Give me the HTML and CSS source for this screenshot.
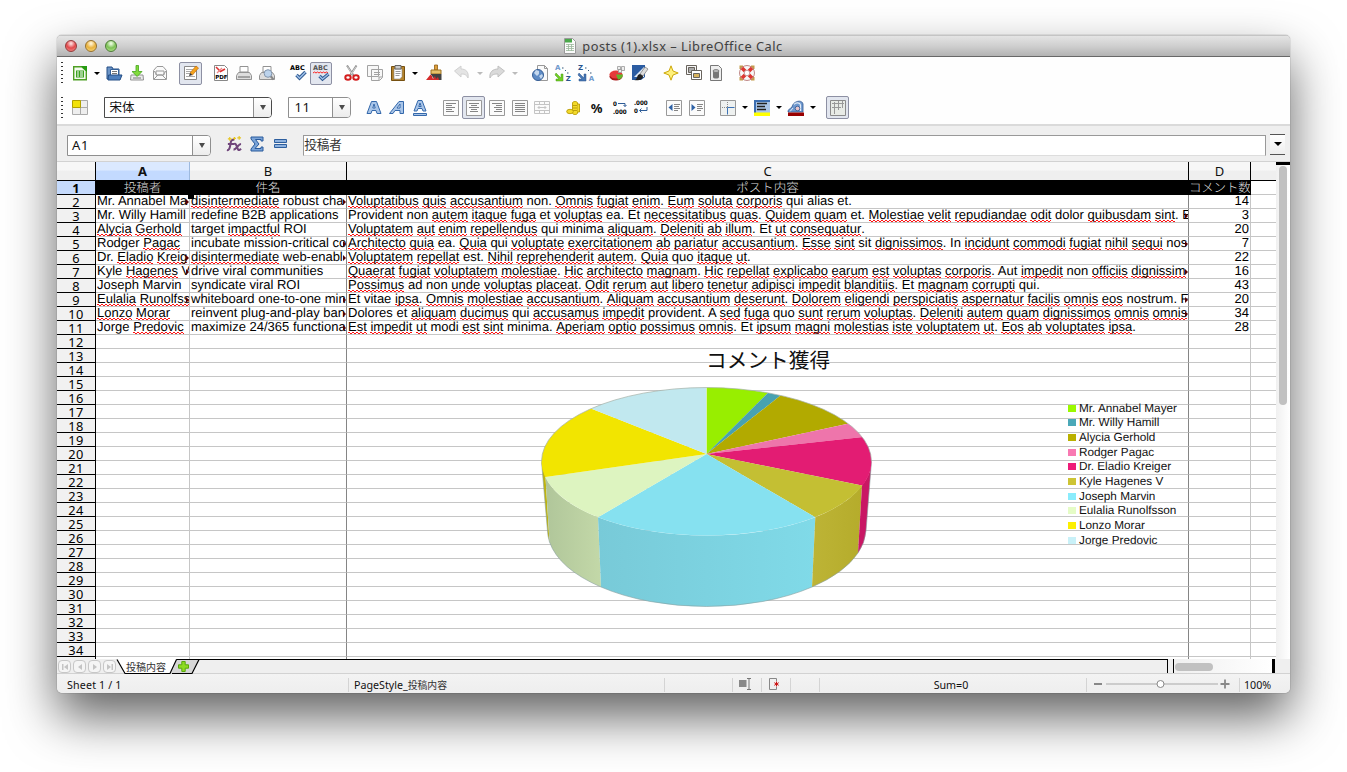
FILE: index.html
```html
<!DOCTYPE html>
<html lang="ja">
<head>
<meta charset="utf-8">
<title>posts (1).xlsx – LibreOffice Calc</title>
<link rel="stylesheet" href="styles.css">
</head>
<body>
<div class="window">
  <header class="titlebar">
    <div class="lights"><span class="light red"></span><span class="light amber"></span><span class="light green"></span></div>
    <div class="title">
      <svg class="doc" viewBox="0 0 12 16"><path d="M.5.5h8l3 3v12H.5z" fill="#fafafa" stroke="#999"/><path d="M1 1h7v3.5H1z" fill="#4aa84a"/><path d="M2 6.500h8M2 8.500h8M2 10.500h8M2 12.500h8M4.500 6v7M7.500 6v7" stroke="#9ab89a" stroke-width=".8"/></svg>
      <span>posts (1).xlsx – LibreOffice Calc</span>
    </div>
  </header>

  <div class="toolbar first">
    <span class="grip"></span>
    <span class="cell"><svg viewBox="0 0 16 16"><path d="M1.700 1.700h8l4.600 4V14.800H1.700z" fill="#f4fbef" stroke="#4f9f24" stroke-width="1.400"/><path d="M9 1h6v6L13 5 11 3z" fill="#259b12"/><path d="M4 5.500h8v7H4z" fill="#3da220"/><path d="M5 6.500h2v1H5zm3 0h3v1H8zM5 8.500h2v1H5zm3 0h3v1H8zm-3 2h2v1H5zm3 0h3v1H8z" fill="#fff"/></svg></span>
    <span class="arrow"></span>
    <span class="cell"><svg viewBox="0 0 16 16"><path d="M1 2h5l1 2h6v10H1z" fill="#6c94c6" stroke="#244f86"/><path d="M4.500 4.500h8V12h-8z" fill="#fff" stroke="#32609a"/><path d="M6 6.500h5M6 8.500h5" stroke="#777"/><path d="M2.500 10H16l-2 5H2z" fill="#4d7fbd" stroke="#244f86"/></svg></span>
    <span class="cell"><svg viewBox="0 0 16 16"><path d="M2 10h12l.5 5h-13z" fill="#ececec" stroke="#929292"/><path d="M4 13h8" stroke="#777"/><path d="M7 .500h2.500v6H13L8.200 11.500 3 6.500h4z" fill="#82db3c" stroke="#45a51c" stroke-width=".8"/></svg></span>
    <span class="cell"><svg viewBox="0 0 16 16" fill="#fafafa" stroke="#999"><path d="M1.500 5.500 5 1.500h6l3.500 4v9h-13z"/><path d="M4 6h8v4H4zM2 14l4-4h4l4 4M2 6l3 4m9-4-3 4"/></svg></span>
    <span class="gap"></span>
    <span class="cell on"><svg viewBox="0 0 16 16"><path d="M1.500 1.500h12v13h-12z" fill="#fff" stroke="#888"/><path d="M3 4.500h7M3 6.500h5M3 8.500h4M3 11.500h9" stroke="#aaa"/><path d="m7 8 6-7 2.500 2-6 7z" fill="#f3a31c" stroke="#c46a0c" stroke-width=".7"/><path d="m7 8 2.500 2L6 11z" fill="#333"/></svg></span>
    <span class="gap"></span>
    <span class="cell"><svg viewBox="0 0 16 16"><path d="M1.500.500h10l3 3v12h-13z" fill="#fff" stroke="#888"/><path d="M3 2l4.500 4.500L12 4" fill="none" stroke="#d33" stroke-width="1.600"/><path d="M4 8l5-5" stroke="#e88" stroke-width="1.200"/><text x="2.200" y="13.800" class="pdf">PDF</text></svg></span>
    <span class="cell"><svg viewBox="0 0 16 16" stroke="#939393"><path d="M4 1.500h8V7H4z" fill="#fff"/><path d="M2.500 7.500h11l2 3v4H.5v-4z" fill="#ddd"/><path d="M2 12h12" stroke="#666"/></svg></span>
    <span class="cell"><svg viewBox="0 0 16 16" stroke="#939393"><path d="M4 1.500h8V7H4z" fill="#fff"/><path d="M2.500 7.500h11l2 3v4H.5v-4z" fill="#ddd"/><path d="m11.500 11 3 3.500" stroke="#888" stroke-width="2"/><circle cx="9" cy="8.500" r="3.800" fill="#bcd3ec" stroke="#8295ad"/></svg></span>
    <span class="gap"></span>
    <span class="cell"><svg viewBox="0 0 16 16"><text x="0" y="5" class="abc">ABC</text><path d="m6.500 10 3 3 6-6" fill="none" stroke="#28538c" stroke-width="3.400"/><path d="m6.500 10 3 3 6-6" fill="none" stroke="#9bbce5" stroke-width="1.600"/></svg></span>
    <span class="cell on"><svg viewBox="0 0 16 16"><text x="0" y="5" class="abc dim">ABC</text><path d="m0 8 1.500-1L3 8l1.500-1L6 8l1.500-1L9 8l1.500-1L12 8l1.500-1L15 8" fill="none" stroke="#f22"/><path d="m6.500 11 3 3 6-5" fill="none" stroke="#28538c" stroke-width="3.200"/><path d="m6.500 11 3 3 6-5" fill="none" stroke="#9bbce5" stroke-width="1.500"/></svg></span>
    <span class="gap"></span>
    <span class="cell"><svg viewBox="0 0 16 16"><path d="m3 .5 6.500 10M12.500.5 6 10.500" stroke="#8d8d8d" stroke-width="2"/><path d="m3.500 1.500 5 8M12 1.500l-5 8" stroke="#eee" stroke-width=".7"/><g fill="none" stroke="#d31d1d" stroke-width="2"><ellipse cx="4" cy="12.500" rx="2.700" ry="2.200"/><ellipse cx="12" cy="12.500" rx="2.700" ry="2.200"/></g></svg></span>
    <span class="cell"><svg viewBox="0 0 16 16" fill="#f8f8f8" stroke="#a2a2a2"><path d="M.5.500h11v11H.5zM4.500 4.500h11v8l-3 3h-8z"/><path d="M7 7.500h6M7 9.500h6M7 11.500h4M15 12h-3v3"/></svg></span>
    <span class="cell"><svg viewBox="0 0 16 16"><path d="M1.500 1.500h13v14h-13z" fill="#b5842c" stroke="#765010"/><path d="M4 4h8v7.500L10 14H4z" fill="#fff" stroke="#888" stroke-width=".6"/><path d="M5 .5h6V4H5z" fill="#ccc" stroke="#666"/><path d="M5.500 6.500h5M5.500 8.500h5M5.500 10.500h4" stroke="#999"/></svg></span>
    <span class="arrow"></span>
    <span class="gap tiny"></span>
    <span class="cell"><svg viewBox="0 0 16 16"><path d="M8.500 0h3v5h-3z" fill="#dda03c" stroke="#8f5d13" stroke-width=".8"/><path d="M5 5h10v4H5z" fill="#e8c26a" stroke="#9c7022"/><path d="M4.500 9h11v6H9z" fill="#424242"/><path d="M4.500 9.500 0 15h13l-1-3-2 2-1-3-2 3-1-3z" fill="#d52b2b"/></svg></span>
    <span class="gap small"></span>
    <span class="cell"><svg viewBox="0 0 16 16"><path d="M.5 6 7 1v3c5 0 8 3 7 9-2-4-4-4-7-4v3z" fill="#e4e4e4" stroke="#d0d0d0"/></svg></span>
    <span class="arrow off"></span>
    <span class="cell"><svg viewBox="0 0 16 16"><path d="M15.500 6 9 1v3c-5 0-9 3-8 9 2-4 5-4 8-4v3z" fill="#dadada" stroke="#c0c0c0"/></svg></span>
    <span class="arrow off"></span>
    <span class="gap"></span>
    <span class="cell"><svg viewBox="0 0 16 16"><path d="M5.500.500h7l3 3v12h-10z" fill="#fafafa" stroke="#999"/><path d="M12.500.500v3h3" fill="none" stroke="#999"/><circle cx="6" cy="10" r="5.500" fill="#5e8bc5" stroke="#375f96"/><path d="m2 8 2-3 3 1v3l-2 2zm5 3 3-2 1 2-2 3z" fill="#c5d8ee"/></svg></span>
    <span class="cell"><svg viewBox="0 0 16 16"><text x="0" y="4.800" class="az">A</text><text x="10.800" y="16" class="az dark">Z</text><path d="M7 3h1.500M10 5.500h1M12 8h1.500" stroke="#357"/><path d="m1 8 5 5V9h2v7H1v-2h3L0 10z" fill="#71cf23" stroke="#49981b" stroke-width=".5"/></svg></span>
    <span class="cell"><svg viewBox="0 0 16 16"><text x="0" y="4.800" class="az dark">Z</text><text x="10.800" y="16" class="az">A</text><path d="M7 3h1.500M10 5.500h1M12 8h1.500" stroke="#357"/><path d="m1 8 5 5V9h2v7H1v-2h3L0 10z" fill="#4777b4" stroke="#2b538b" stroke-width=".5"/></svg></span>
    <span class="gap"></span>
    <span class="cell"><svg viewBox="0 0 16 16"><ellipse cx="7" cy="11.500" rx="6.500" ry="4" fill="#a91717"/><ellipse cx="7" cy="9.500" rx="6.500" ry="4" fill="#e63a3a"/><path d="M7 9.500h7c0 3-3 5-5 5z" fill="#62b62c"/><path d="M8.500 1.500h3v3h-3zm4 0h3v4h-3zm-3 3h3v3h-3z" fill="#eee" stroke="#999" stroke-width=".8"/></svg></span>
    <span class="cell"><svg viewBox="0 0 16 16"><path d="M0 0h13v12L9 15H0z" fill="#2b5ca2"/><path d="M2 12 12 2v10z" fill="#dfe9f5"/><path d="m8 9 5-7 3 2-5 7z" fill="#ddd" stroke="#777" stroke-width=".7"/><path d="M2 15c4 0 2-5 6-6l3 2c0 4-5 5-9 4z" fill="#222"/></svg></span>
    <span class="gap"></span>
    <span class="cell"><svg viewBox="0 0 16 16"><path d="m8 .8 2 5.200 5.200 2-5.200 2-2 5.200L6 10 .8 8 6 6z" fill="#fff17c" stroke="#cda80b"/></svg></span>
    <span class="cell"><svg viewBox="0 0 16 16" stroke="#68635c"><path d="M.5.500h10v9H.5z" fill="#f5f5f5"/><path d="M2.500 2.500h6v5h-6z" fill="#aaa"/><path d="M5.500 5.500h10v9h-10z" fill="#fff"/><path d="M7.500 8.500h6v4h-6z" fill="#d7b35e"/></svg></span>
    <span class="cell"><svg viewBox="0 0 16 16"><path d="M2.500.500h8l3 3v12h-11z" fill="#eee" stroke="#777"/><path d="M5 6v6c0 2 6 2 6 0V6z" fill="#777"/><ellipse cx="8" cy="6" rx="3" ry="1.500" fill="#bbb" stroke="#666" stroke-width=".7"/></svg></span>
    <span class="gap"></span>
    <span class="cell"><svg viewBox="0 0 16 16"><path d="M.500.500H4V4H.500zM12 .500h3.500V4H12zM.500 12H4v3.500H.500zM12 12h3.500v3.500H12z" fill="#c39a4a"/><circle cx="8" cy="8" r="7.500" fill="#f8f8f8" stroke="#b06a6a" stroke-width=".8"/><path d="M3 3l3 3M13 3l-3 3M3 13l3-3M13 13l-3-3" stroke="#dd3832" stroke-width="3.600"/><circle cx="8" cy="8" r="2.800" fill="#fff" stroke="#b77" stroke-width=".8"/></svg></span>
  </div>

  <div class="toolbar second">
    <span class="grip"></span>
    <span class="cell"><svg viewBox="0 0 16 16" stroke="#aaa" fill="#eee"><path d="M8.500.500h7v7h-7zM.5 7.500h8v7h-8zm8 0h7v7h-7z"/><path d="M.5.500h8v7h-8z" fill="#f2e20b" stroke="#b1a100"/></svg></span>
    <span class="combo font"><span class="value cjk">宋体</span><span class="drop"></span></span>
    <span class="combo size"><span class="value">11</span><span class="drop"></span></span>
    <span class="gap wide"></span>
    <span class="cell"><svg viewBox="0 0 16 16" class="letter"><path d="M5.500 1.500h5l4.500 12h-4l-1-3H6l-1 3H1zM8 4 6.800 8h2.400z"/></svg></span>
    <span class="cell"><svg viewBox="0 0 16 16" class="letter"><path d="M10 1.500h4.500v12H11v-3H6l-2 3H.5zM11 4 8 8h3z"/></svg></span>
    <span class="cell"><svg viewBox="0 0 16 16" class="letter"><path d="M6 .500h4l4 10.500h-3l-1-2.500H6L5 11H2zM8 3 6.800 6.500h2.400zM1.500 13.500h13v2h-13z"/></svg></span>
    <span class="gap"></span>
    <span class="cell"><svg viewBox="0 0 16 16" class="para"><path d="M.5.500h15v15H.5z"/><path class="ln" d="M3 3.500h10M3 5.500h6M3 7.500h9M3 9.500h6M3 11.500h8"/></svg></span>
    <span class="cell on"><svg viewBox="0 0 16 16" class="para"><path d="M.5.500h15v15H.5z"/><path class="ln" d="M3 3.500h10M5 5.500h6M3 7.500h10M5 9.500h6M4 11.500h8"/></svg></span>
    <span class="cell"><svg viewBox="0 0 16 16" class="para"><path d="M.5.500h15v15H.5z"/><path class="ln" d="M3 3.500h10M7 5.500h6M5 7.500h8M7 9.500h6M5 11.500h8"/></svg></span>
    <span class="cell"><svg viewBox="0 0 16 16" class="para"><path d="M.5.500h15v15H.5z"/><path class="ln" d="M3 3.500h10M3 5.500h10M3 7.500h10M3 9.500h10M3 11.500h10"/></svg></span>
    <span class="cell"><svg viewBox="0 0 16 16" class="para faint"><path d="M.5 1.500h15v12H.5zM.5 4.500h15M.5 10.500h15M5.500 1v3M10.500 1v3M5.500 11v3M10.500 11v3M4 7.500h8M5.500 6 4 7.500 5.500 9M10.500 6 12 7.500 10.500 9"/></svg></span>
    <span class="gap"></span>
    <span class="cell"><svg viewBox="0 0 16 16" fill="#f3da2a" stroke="#b89b08" stroke-width=".9"><path d="M6.500 3c0-2 5-2 5 0v10c0 2-5 2-5 0z"/><ellipse cx="4" cy="11.500" rx="3.300" ry="2.200"/><path d="M11.500 4h2v8h-2M7 5.500h4M7 8h4M7 10.500h4"/></svg></span>
    <span class="cell"><span class="percent">%</span></span>
    <span class="cell"><svg viewBox="0 0 16 16"><text x="1" y="6" class="num">0</text><text x="1" y="14" class="num">.000</text><path d="M6 3.500h7v3M11.500 5 13 6.500 14.500 5" fill="none" stroke="#2e5c97"/></svg></span>
    <span class="cell"><svg viewBox="0 0 16 16"><text x="0" y="5" class="num">.000</text><text x="0" y="13" class="num">0</text><path d="M13 7v3.500H6M7.500 8.500l-2 2 2 2" fill="none" stroke="#2e5c97"/></svg></span>
    <span class="gap"></span>
    <span class="cell"><svg viewBox="0 0 16 16" class="para"><path d="M.5.500h15v15H.5z"/><path class="ln" d="M8 4.500h6M8 6.500h5M8 8.500h6M8 10.500h4"/><path d="M6.500 4v7L2.500 7.500z" class="tri"/></svg></span>
    <span class="cell"><svg viewBox="0 0 16 16" class="para"><path d="M.5.500h15v15H.5z"/><path class="ln" d="M8 4.500h6M8 6.500h5M8 8.500h6M8 10.500h4"/><path d="M2.500 4v7l4-3.500z" class="tri"/></svg></span>
    <span class="gap"></span>
    <span class="cell"><svg viewBox="0 0 16 16"><path d="M.5.500h15v15H.5z" fill="#eef1f0" stroke="#999"/><path d="M7.500 2v12M2 7.500h12" stroke="#8a8a8a" stroke-dasharray="1 1"/><path d="M14.500 7.500h-7v7" fill="none" stroke="#3e73b5"/></svg></span>
    <span class="arrow"></span>
    <span class="cell"><svg viewBox="0 0 16 16"><path d="M0 0h16v13H0z" fill="#3b6db0"/><path d="M2 2h14v11H2z" fill="#a9c5e8"/><path d="M3 3.500h10M3 6.500h8M3 9.500h9" stroke="#222" stroke-width="1.300"/><path d="M0 12.500h16V16H0z" fill="#ff0"/></svg></span>
    <span class="arrow"></span>
    <span class="cell"><svg viewBox="0 0 16 16"><path d="M0 12c0-3 2-3 4-5C5 1 14-1 15 4v8z" fill="#6f99cf" stroke="#2e5791" stroke-width=".8"/><path d="M6 4.500c2-2.500 6-2 6.500.5v6" fill="none" stroke="#e4edf8" stroke-width="1.200"/><circle cx="9.500" cy="8.500" r="2.300" fill="#e9c5cb" stroke="#2e5791" stroke-width=".8"/><path d="M2 11.500 5 8" stroke="#dfe9f5"/><path d="M0 12.500h16V16H0z" fill="#900"/></svg></span>
    <span class="arrow"></span>
    <span class="gap"></span>
    <span class="cell on"><svg viewBox="0 0 16 16"><path d="M.5.500h15v15H.5z" fill="#e8ebe6" stroke="#8b8b8b"/><path d="M4.500 2v12M8.500 1v9M12.500 1v7M2 3.500h12M2 7.500h9" stroke="#999"/></svg></span>
  </div>

  <div class="formula">
    <span class="combo ref"><span class="value">A1</span><span class="drop"></span></span>
    <span class="fcell"><svg viewBox="0 0 17 17"><path d="M9 4c-4-1-4 3-4.500 6S3 15.500 1 15M2 8.500h7M9 8.500c2-1 3 5 4 6s2 0 3-1M16 8.500c-3 0-5 6-8 6" fill="none" stroke="#71477c" stroke-width="2.200"/><path d="M4 1v4M2 3h4M9 1v3M7.500 2.500h3M14 0v4M12 2h4" stroke="#e7c51f" stroke-width="1.200"/></svg></span>
    <span class="fcell"><svg viewBox="0 0 16 16"><path d="M2 1h12v4h-2V3.500H6.500L10 8l-4 4.500h6V11h2v4H2v-2l4-5-4-5z" fill="#7ba4d8" stroke="#285a9c"/></svg></span>
    <span class="fcell"><svg viewBox="0 0 16 16" fill="#8db1de" stroke="#2d5e9e"><path d="M2.500 3.500h12v3h-12zm0 5h12v3h-12z"/></svg></span>
    <span class="entry cjk">投稿者</span>
    <span class="expand"><i></i></span>
  </div>

  <main class="sheet">
    <div class="grid">
      <div class="heads">
        <span class="corner"></span><span class="ca sel">A</span><span class="cb">B</span><span class="cc">C</span><span class="cd">D</span><span class="ce"></span>
      </div>
      <div class="rows" id="rows"></div>
      <span class="handle"></span>
      <figure class="chart">
        <figcaption class="cjk">コメント獲得</figcaption>
        <svg class="pie" viewBox="536 380 342 232">
          <defs>
            <linearGradient id="gj"><stop offset="0" stop-color="#78cad8"/><stop offset="1" stop-color="#80dae8"/></linearGradient>
            <linearGradient id="ge"><stop offset="0" stop-color="#b0c69a"/><stop offset="1" stop-color="#c3d8a8"/></linearGradient>
            <linearGradient id="gk"><stop offset="0" stop-color="#bdb436"/><stop offset="1" stop-color="#b5ac2b"/></linearGradient>
            <clipPath id="top"><ellipse cx="706.500" cy="461.500" rx="165" ry="74"/></clipPath>
          </defs>
          <path d="M541.500 461.500 547.500 531Q547.700 536 549.500 542L545.500 477z" fill="#bfb40e"/>
          <path d="M545.500 477A165 74 0 0 0 598 517.200L601 587A159.500 78 0 0 1 549.500 542z" fill="url(#ge)"/>
          <path d="M598 517.200A165 74 0 0 0 815.300 517.200L812 587A159.500 78 0 0 1 601 587z" fill="url(#gj)"/>
          <path d="M815.300 517.200A165 74 0 0 0 862 485.500L858 553A159.500 78 0 0 1 812 587z" fill="url(#gk)"/>
          <path d="M862 485.500A165 74 0 0 0 871.500 461.500L866 531Q865 543 858 553z" fill="#c91764"/>
          <path d="M541.500 461.500 547.500 531Q547.700 536 549.500 542A159.500 78 0 0 0 601 587A159.500 78 0 0 0 812 587A159.500 78 0 0 0 858 553Q865 543 866 531L871.500 461.500" fill="none" stroke="#8aa0a0" stroke-width=".6"/>
          <g clip-path="url(#top)">
            <path d="M706.500 454V380H794.300L768.300 392.500z" fill="#98ee00"/>
            <path d="M706.500 454 768.300 392.500 778 380H800L780.500 395.500z" fill="#48a2b1"/>
            <path d="M706.500 454 780.500 395.500 800 380H940L847.800 423.800z" fill="#b2aa00"/>
            <path d="M706.500 454 847.800 423.800 900 412.500V430L863 437z" fill="#ee75ab"/>
            <path d="M706.500 454 863 437 900 433V501L862 485.500z" fill="#e31c73"/>
            <path d="M706.500 454 862 485.500 900 494V580H869L815.300 517.200z" fill="#c4bf33"/>
            <path d="M706.500 454 815.300 517.200 869 560H540L598 517.200z" fill="#86e1f0"/>
            <path d="M706.500 454 598 517.200 540 551V478.500L545.500 477z" fill="#ddf4c0"/>
            <path d="M706.500 454 545.500 477 530 479V380H559L591.500 408.700z" fill="#f2e500"/>
            <path d="M706.500 454 591.500 408.700 520 380H706.500z" fill="#c1e8ef"/>
          </g>
          <path d="M706.500 387.500V454" stroke="#d5efb0" fill="none"/>
          <path d="M541.500 461.500A165 74 0 0 1 871.500 461.500" fill="none" stroke="#a5b0a8" stroke-width=".7"/>
        </svg>
        <ul class="legend">
          <li><i class="k1"></i>Mr. Annabel Mayer</li><li><i class="k2"></i>Mr. Willy Hamill</li><li><i class="k3"></i>Alycia Gerhold</li><li><i class="k4"></i>Rodger Pagac</li><li><i class="k5"></i>Dr. Eladio Kreiger</li><li><i class="k6"></i>Kyle Hagenes V</li><li><i class="k7"></i>Joseph Marvin</li><li><i class="k8"></i>Eulalia Runolfsson</li><li><i class="k9"></i>Lonzo Morar</li><li><i class="k10"></i>Jorge Predovic</li>
        </ul>
      </figure>
    </div>
    <div class="vscroll"><i></i></div>
  </main>

  <div class="tabs">
    <div class="nav">
      <b><svg viewBox="0 0 8 8"><path d="M1 1h1.500v6H1zM7 1v6L3 4z"/></svg></b><b><svg viewBox="0 0 8 8"><path d="M6 1v6L2 4z"/></svg></b><b><svg viewBox="0 0 8 8"><path d="M2 1v6l4-3z"/></svg></b><b><svg viewBox="0 0 8 8"><path d="M1 1v6l4-3zM5.500 1H7v6H5.500z"/></svg></b>
    </div>
    <div class="tabstrip">
      <svg class="shape" viewBox="0 0 82 16"><path d="M1 0 8 14.500H53L59 0z" fill="#fff"/><path d="M59.500.500 53 14.500H75L82 .500z" fill="#d6d6d6"/><path d="M0 .500 8 14.500H53L59.500.500M55 14.500H75L82 .500H59.500" fill="none" stroke="#000" stroke-width="1.200"/><path d="M64.800 2.500h3.400v3.300h3.300v3.400h-3.300v3.300h-3.400V9.200h-3.300V5.800h3.300z" fill="#8ddb22" stroke="#58a80c"/></svg>
      <span class="cjk">投稿内容</span>
    </div>
    <div class="rule"></div>
    <div class="hscroll"><i></i></div>
  </div>

  <footer class="status">
    <span class="s1">Sheet 1 / 1</span>
    <span class="s2">PageStyle_<small>投稿内容</small></span>
    <span class="s3"></span>
    <span class="s4"><svg viewBox="0 0 12 12"><path d="M0 2h7.500v7H0z" fill="#888"/><path d="M8 .500h4M8 11.500h4M10 .500v11" stroke="#777"/></svg></span>
    <span class="s5"><svg viewBox="0 0 12 12"><path d="M8.500 3V.500h-7v11h7V9" fill="none" stroke="#888"/><path d="M8.500 3.500v5M6.300 4.700l4.400 2.600M10.700 4.700 6.300 7.300" stroke="#c11"/></svg></span>
    <span class="s6"></span>
    <span class="s7">Sum=0</span>
    <span class="s8"><svg viewBox="0 0 140 12"><path d="M3 6h8M129.500 6h9M134 1.500v9" stroke="#888" stroke-width="1.800"/><path d="M15 6h112" stroke="#ccc" stroke-width="1.800"/><circle cx="69.500" cy="6" r="3.500" fill="#fff" stroke="#888"/></svg></span>
    <span class="s9">100%</span>
  </footer>
</div>
<script src="sheet.js"></script>
</body>
</html>
```
FILE: sheet.js
```js
// Words the spell checker flags are wrapped in underscores; a trailing ">" marks text cut off by the cell edge.
const data = [
  ["Mr. Annabel Ma>", "_disintermediate_ robust cha>", "_Voluptatibus_ _quis_ _accusantium_ non. _Omnis_ _fugiat_ _enim_. _Eum_ _soluta_ _corporis_ qui alias et.", 14],
  ["Mr. Willy Hamill", "redefine B2B applications", "Provident non _autem_ _itaque_ _fuga_ et _voluptas_ ea. Et _necessitatibus_ _quas_. _Quidem_ _quam_ et. _Molestiae_ _velit_ _repudiandae_ _odit_ dolor _quibusdam_ _sint_. E>", 3],
  ["_Alycia_ _Gerhold_", "target _impactful_ ROI", "_Voluptatem_ _aut_ _enim_ _repellendus_ qui minima _aliquam_. _Deleniti_ _ab_ _illum_. Et _ut_ _consequatur_.", 20],
  ["Rodger _Pagac_", "incubate mission-critical co>", "_Architecto_ _quia_ ea. _Quia_ qui _voluptate_ _exercitationem_ _ab_ _pariatur_ _accusantium_. _Esse_ _sint_ sit _dignissimos_. In _incidunt_ _commodi_ _fugiat_ _nihil_ _sequi_ nos>", 7],
  ["Dr. _Eladio_ _Kreig_>", "_disintermediate_ web-enabl>", "_Voluptatem_ _repellat_ est. _Nihil_ _reprehenderit_ _autem_. _Quia_ quo _itaque_ _ut_.", 22],
  ["Kyle _Hagenes_ V>", "drive viral communities", "_Quaerat_ _fugiat_ _voluptatem_ _molestiae_. _Hic_ _architecto_ _magnam_. _Hic_ _repellat_ _explicabo_ _earum_ _est_ _voluptas_ _corporis_. Aut _impedit_ non _officiis_ _dignissim_>", 16],
  ["Joseph Marvin", "syndicate viral ROI", "_Possimus_ ad non _unde_ _voluptas_ _placeat_. _Odit_ _rerum_ _aut_ _libero_ _tenetur_ _adipisci_ _impedit_ _blanditiis_. Et _magnam_ _corrupti_ qui.", 43],
  ["_Eulalia_ _Runolfss_>", "whiteboard one-to-one min>", "Et vitae _ipsa_. _Omnis_ _molestiae_ _accusantium_. _Aliquam_ _accusantium_ _deserunt_. _Dolorem_ _eligendi_ _perspiciatis_ _aspernatur_ _facilis_ _omnis_ _eos_ nostrum. F>", 20],
  ["_Lonzo_ _Morar_", "reinvent plug-and-play ban>", "Dolores et _aliquam_ _ducimus_ qui _accusamus_ _impedit_ provident. A _sed_ _fuga_ quo _sunt_ _rerum_ _voluptas_. _Deleniti_ _autem_ _quam_ _dignissimos_ _omnis_ _omnis_>", 34],
  ["Jorge _Predovic_", "maximize 24/365 functiona>", "_Est_ _impedit_ _ut_ modi _est_ _sint_ minima. _Aperiam_ _optio_ _possimus_ _omnis_. Et _ipsum_ _magni_ _molestias_ _iste_ _voluptatem_ _ut_. _Eos_ _ab_ _voluptates_ _ipsa_.", 28]
];

const cell = (cls, text) => {
  let s = String(text);
  const cut = s.endsWith(">");
  if (cut) s = s.slice(0, -1);
  s = s.replace(/_([^_]+)_/g, '<span class="sp">$1</span>');
  return `<span class="${cls}${cut ? " cut" : ""}">${s}</span>`;
};

let html = '<div class="row top"><b>1</b><span class="ca">投稿者</span><span class="cb">件名</span><span class="cc">ポスト内容</span><span class="cd">コメント数</span><span class="ce"></span></div>';
for (let n = 2; n <= 34; n++) {
  const d = data[n - 2] || ["", "", "", ""];
  html += `<div class="row"><b>${n}</b>${cell("ca", d[0])}${cell("cb", d[1])}${cell("cc", d[2])}${cell("cd", d[3])}<span class="ce"></span></div>`;
}
html += '<div class="row last"><b></b><span class="ca"></span><span class="cb"></span><span class="cc"></span><span class="cd"></span><span class="ce"></span></div>';
document.getElementById("rows").innerHTML = html;
```
FILE: styles.css
```css
* { box-sizing: border-box; }
body {
  margin: 0;
  height: 772px;
  overflow: hidden;
  background: #fff;
  padding: 35px 57px 0;
  font: 12px "Noto Sans", "Noto Sans CJK JP", sans-serif;
  color: #111;
}
svg { display: block; overflow: visible; }
.cjk { font-family: "Noto Sans CJK JP", sans-serif; }

.window {
  width: 1233px;
  height: 658px;
  border-radius: 5px;
  overflow: hidden;
  background: #efefef;
  display: flex;
  flex-direction: column;
  box-shadow: 0 0 1px rgba(0,0,0,.7), 0 24px 50px rgba(0,0,0,.62);
}

.titlebar {
  height: 22px;
  flex: none;
  display: grid;
  grid-template-columns: 1fr auto 1fr;
  align-items: center;
  background: linear-gradient(#e4e4e4, #cfcfcf 50%, #b3b3b3);
  border-top: 1px solid #c4c4c4;
  border-bottom: 1px solid #686868;
}
.lights { display: flex; gap: 8px; padding-left: 8px; }
.light { width: 12px; height: 12px; border-radius: 50%; border: 1px solid; }
.red { background: radial-gradient(circle at 50% 25%, #fbd3d3 8%, #e2494b 50%, #f39a94); border-color: #943a3a; }
.amber { background: radial-gradient(circle at 50% 25%, #fff0cc 8%, #e8b13c 50%, #fbe08a); border-color: #96702d; }
.green { background: radial-gradient(circle at 50% 25%, #e5f8d8 8%, #7cc155 50%, #c1ee99); border-color: #4e7b38; }
.title { display: flex; align-items: center; gap: 6px; font-size: 12.800px; letter-spacing: .500px; color: #404040; white-space: nowrap; line-height: 18px; }
.doc { width: 12px; height: 16px; }

.toolbar { height: 34px; flex: none; display: flex; align-items: center; background: #fefefe; padding-left: 4px; }
.first { padding-bottom: 2px; }
.second { height: 35px; border-bottom: 2px solid #dadada; }
.grip { width: 2px; height: 22px; margin-right: 5.500px; background: repeating-linear-gradient(#333 0 1px, transparent 1px 4px); }
.cell { width: 22.900px; height: 23px; flex: none; display: flex; align-items: center; justify-content: center; }
.cell svg { width: 16px; height: 16px; }
.on { background: #e2e6ef; border: 1px solid #8d90a3; border-radius: 2px; }
.arrow { width: 11px; flex: none; display: flex; justify-content: center; }
.arrow::before { content: ""; border: 3px solid transparent; border-top-color: #000; border-bottom: 0; }
.arrow.off { width: 12px; }
.arrow.off::before { border-top-color: #bbb; }
.gap { width: 8.400px; flex: none; }
.first .gap { width: 8px; }
.first .gap.small { width: 6px; }
.first .gap.tiny { width: 2px; }
.gap.wide { width: 11px; }
.pdf { font: bold 5.500px "DejaVu Sans", sans-serif; }
.abc { font: bold 6.500px "DejaVu Sans", sans-serif; }
.dim { fill: #555; }
.az { font: bold 7px "DejaVu Sans", sans-serif; fill: #6f98cc; }
.az.dark { fill: #27548f; }
.num { font: bold 6.200px "DejaVu Sans Condensed", "DejaVu Sans", sans-serif; }
.percent { font: bold 13px/18px "Noto Sans", sans-serif; }
.letter path { fill: #a9c5e8; stroke: #3468ab; fill-rule: evenodd; }
.para path { fill: #fbfbfb; stroke: #999; }
.para .ln { fill: none; stroke: #858585; }
.para .tri { fill: #2e62a6; stroke: none; }
.para.faint path { stroke: #c4c4c4; }

.combo { display: flex; flex: none; height: 21px; background: #fff; border: 1px solid #8f8f8f; border-radius: 0 4px 4px 0; }
.combo .value { flex: 1; padding-left: 5px; font-size: 13px; line-height: 18px; }
.drop { width: 18px; border-left: 1px solid #8f8f8f; background: linear-gradient(#fff, #ececec); border-radius: 0 3px 3px 0; display: flex; align-items: center; justify-content: center; }
.drop::before { content: ""; border: 3.500px solid transparent; border-top: 5px solid #4b4b4b; border-bottom: 0; }
.combo.font { width: 168px; margin-left: 13px; border-color: #4a4a4a; }
.combo.font .value { font-size: 12.500px; padding-left: 4px; }
.combo.size { width: 63px; margin-left: 16px; }
.combo.size .value { letter-spacing: .600px; }

.formula { height: 36px; flex: none; display: flex; align-items: center; padding: 3px 5px 0 10px; border-bottom: 1px solid #d2d2d2; }
.combo.ref { width: 144px; margin-right: 11px; }
.combo.ref .value { padding-left: 4px; letter-spacing: .600px; }
.fcell { width: 23.400px; height: 22px; display: flex; justify-content: center; align-items: center; padding-bottom: 3px; }
.fcell svg { width: 16px; height: 16px; }
.entry { flex: 1; height: 21px; margin-left: 11px; border: 1px solid #999; border-bottom-color: #ddd; background: #fff; font-size: 12.600px; line-height: 16px; color: #333; }
.expand { width: 15px; height: 21px; margin: 0 0 2px 4px; background: linear-gradient(#fff, #eee); border: solid #555; border-width: 1px 0; display: flex; align-items: center; justify-content: center; }
.expand i { border: 4px solid transparent; border-top-color: #000; border-bottom: 0; }

.sheet { flex: 1; display: flex; min-height: 0; }
.grid { width: 1219px; position: relative; background: #fff; overflow: hidden; }
.ca { width: 94px; } .cb { width: 157px; } .cc { width: 842px; } .cd { width: 62px; } .ce { width: 25px; }
.ca, .cb, .cc, .cd, .ce { flex: none; }

.heads { display: flex; height: 19px; font-size: 13px; line-height: 18px; text-align: center; background: linear-gradient(#f7f7f7 45%, #efefef 50%); border-bottom: 1px solid #000; }
.heads span { border-right: 1px solid #000; }
.heads .corner { width: 39px; flex: none; }
.heads .sel { background: linear-gradient(#dbe9ff 45%, #c3daff 50%); font-weight: bold; border-right-color: #9db9de; }
.heads .ce { border-right: 0; }

.row { display: flex; height: 14px; font: 13.010px "Liberation Sans", "Noto Sans CJK JP", sans-serif; color: #000; }
.row b { width: 39px; flex: none; font: 12.800px/14px "Noto Sans", sans-serif; letter-spacing: .400px; text-align: center; background: #f1f1f1; border-right: 1px solid #000; border-bottom: 1px solid #000; }
.row > span { border-right: 1px solid #c6c6c6; border-bottom: 1px solid #c6c6c6; padding-left: 1px; line-height: 11px; white-space: pre; overflow: hidden; position: relative; text-rendering: geometricPrecision; }
.row .cb, .row .cc { border-right-color: #858585; }
.row .cd { text-align: right; padding-right: 1px; }
.row > .ce { border-right: 0; }
.top b { background: #c5dafc; font-weight: bold; }
.row.top > span { background: #000; border-color: #000; color: #ddd; text-align: center; font: 300 12.500px/12px "Noto Sans CJK JP", sans-serif; padding: 0; }
.row.top > .cd { letter-spacing: -.200px; }
.row.top > .ce { background: #fff; border-color: #c6c6c6; }
.last { height: 2px; overflow: hidden; }
.last b, .row.last > span { border-bottom: 0; }
.sp {
  display: inline-block;
  height: 13px;
  background:
    repeating-linear-gradient(90deg, #f11 0 2px, transparent 2px 4px) 0 11px / 100% 1px no-repeat,
    repeating-linear-gradient(90deg, transparent 0 2px, #f11 2px 4px) 0 12px / 100% 1px no-repeat;
}
.cut::after { content: ""; position: absolute; right: 0; top: 4px; border: 3px solid transparent; border-left: 3px solid #500; border-right: 0; }
.handle { position: absolute; left: 131px; top: 33px; width: 6px; height: 4px; background: #000; }

.chart { position: absolute; inset: 0; margin: 0; pointer-events: none; }
.chart figcaption { position: absolute; left: 649px; top: 182px; font-size: 20.700px; line-height: 30px; font-weight: 400; white-space: nowrap; }
.pie { position: absolute; left: 479px; top: 218px; width: 342px; height: 232px; }
.legend { position: absolute; left: 1011px; top: 239px; margin: 0; padding: 0; list-style: none; font: 11.750px "Liberation Sans", sans-serif; text-rendering: geometricPrecision; }
.legend li { display: flex; align-items: center; gap: 3px; height: 14.650px; white-space: nowrap; }
.legend i { width: 8px; height: 7px; }
.k1 { background: #9bf900; } .k2 { background: #4aa8b8; } .k3 { background: #bab000; } .k4 { background: #f879b2; } .k5 { background: #ee1c79; }
.k6 { background: #cdc434; } .k7 { background: #8aecfc; } .k8 { background: #e5fcc6; } .k9 { background: #fcef00; } .k10 { background: #c9f1f8; }

.vscroll { flex: 1; background: linear-gradient(90deg, #f0f0f0, #fff); border-top: 3px solid #000; padding: 1px 3px; }
.vscroll i { display: block; width: 8px; height: 239px; border-radius: 4px; background: #c1c1c1; }

.tabs { height: 15px; flex: none; display: flex; border-bottom: 1px solid #d2d2d2; }
.tabs > * { flex: none; }
.nav { display: flex; gap: 2px; padding: 1px 0 0 1px; width: 62px; }
.nav b { width: 13px; height: 13px; border: 1px solid #c7c7c7; border-radius: 4px; background: #f5f5f5; display: flex; align-items: center; justify-content: center; }
.nav svg { width: 8px; height: 8px; fill: #c4c4c4; }
.tabstrip { width: 80px; position: relative; }
.shape { width: 82px; height: 16px; margin-left: -2px; }
.tabstrip span { position: absolute; left: 7px; top: 1px; font-size: 10px; line-height: 13px; white-space: nowrap; color: #333; }
.rule { width: 969px; border-top: 1px solid #000; border-right: 1px solid #000; }
.hscroll { width: 102px; border-left: 1px solid #000; border-right: 3px solid #000; margin-left: 5px; background: linear-gradient(90deg, #f0f0f0, #fff); padding: 4px 1px; }
.hscroll i { display: block; width: 38px; height: 8px; border-radius: 4px; background: #c1c1c1; }

.status { height: 19px; flex: none; display: flex; align-items: center; padding-top: 2px; font-size: 10.700px; background: linear-gradient(#f3f3f3, #eee); }
.status small { font-size: 9.800px; color: #333; }
.status span { height: 14px; line-height: 14px; border-right: 1px solid #d4d4d4; white-space: nowrap; flex: none; }
.status svg { height: 12px; }
.status .s1 { width: 292px; padding-left: 10px; letter-spacing: .150px; }
.status .s2 { width: 316px; padding-left: 5px; }
.status .s3 { width: 68px; }
.status .s4 { width: 29px; padding-left: 6px; }
.status .s5 { width: 29px; padding-left: 6px; }
.status .s6 { width: 29px; }
.status .s7 { width: 267px; text-align: center; padding-right: 4px; }
.s8 { width: 153px; padding-left: 4px; }
.status .s9 { border: 0; padding-left: 4px; }
```
